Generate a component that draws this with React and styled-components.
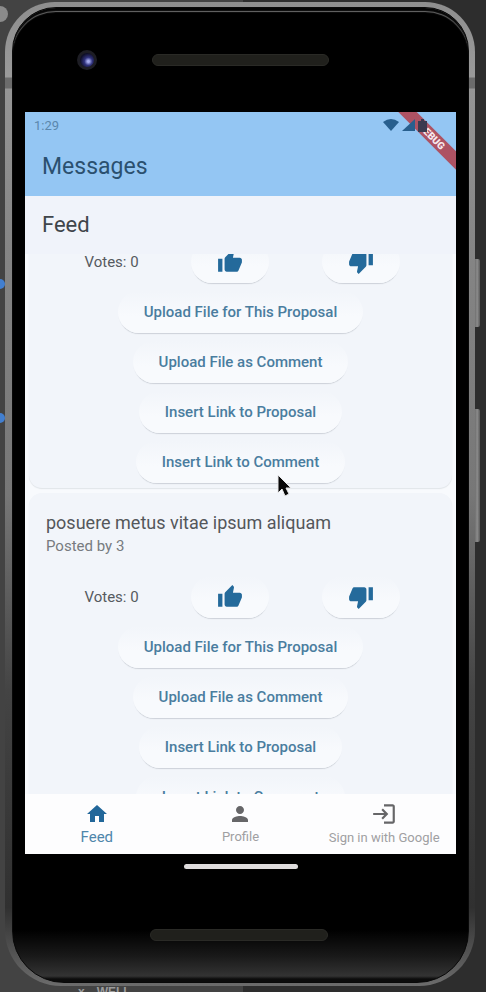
import React, { useLayoutEffect, useRef } from "react";
import styled, { createGlobalStyle } from "styled-components";
import { MdHome, MdPerson, MdLogin, MdThumbUp, MdThumbDown } from "react-icons/md";

const GlobalStyle = createGlobalStyle`
  * { box-sizing: border-box; }
  body { margin: 0; background: #2d2d2d; font-family: Roboto, "Liberation Sans", sans-serif; }
  button { font-family: inherit; cursor: pointer; }
`;

const Desk = styled.main`
  position: relative;
  height: 100vh;
  padding: 2px 11px 6px 5px;
  overflow: hidden;
  background: linear-gradient(90deg, #434343 0 50%, #2d2d2d 50%);
`;

const Dot = styled.span`
  position: absolute;
  left: -${(p) => p.$r}px;
  top: ${(p) => p.$top}px;
  width: ${(p) => p.$r * 2}px;
  height: ${(p) => p.$r * 2}px;
  border-radius: 50%;
  background: ${(p) => p.$color};
`;

const SideKey = styled.span`
  position: absolute;
  right: 6px;
  top: ${(p) => p.$top}px;
  width: 7px;
  height: ${(p) => p.$height}px;
  border-radius: 2px;
  background: linear-gradient(90deg, #555, #8c8c8c 60%, #5a5a5a);
`;

const TerminalText = styled.span`
  position: absolute;
  left: 78px;
  top: 100%;
  margin-top: -7px;
  display: flex;
  gap: 12px;
  font: 700 12px/14px "Liberation Sans", sans-serif;
  color: #9b9b9b;
`;

const Rim = styled.div`
  position: relative;
  height: 100%;
  padding: 5px 6px 3px 7px;
  border-radius: 50px 50px 56px 56px;
  background: linear-gradient(180deg, #8e8e8e 0, #9a9a9a 75px, #6c6c6c 76px, #6c6c6c 86px, #969696 87px, #858585 25%, #777 50%, #444 70%, #303030 92%, #6c6c6c 100%);
`;

const Body = styled.div`
  height: 100%;
  display: flex;
  flex-direction: column;
  padding: 0 12px;
  border: 1px solid #090909;
  border-radius: 44px 44px 52px 52px;
  background: linear-gradient(180deg, #000 0, #000 calc(100% - 52px), #191919 calc(100% - 26px), #333 calc(100% - 6px), #0c0c0c calc(100% - 3px));
  box-shadow: inset 0 4px 1px -1px #050505, inset 0 5px 1px -1px #777;
`;

const Forehead = styled.div`
  flex: none;
  height: 104px;
  display: flex;
  align-items: center;
  padding: 0 127px 0 52px;
`;

const Camera = styled.span`
  flex: none;
  width: 20px;
  height: 20px;
  margin-right: 55px;
  border-radius: 50%;
  border: 3px solid #1d1d24;
  background: radial-gradient(circle at 60% 60%, #a5abee 0 1px, #30327d 4px, #10102a 8px);
`;

const Speaker = styled.span`
  flex: 1;
  height: 12px;
  border-radius: 6px;
  border: 1px solid #2a2a26;
  background: #20201c;
`;

const Screen = styled.section`
  position: relative;
  flex: 1;
  min-height: 0;
  display: flex;
  flex-direction: column;
  overflow: hidden;
  background: #f2f5fa;
`;

const TopBar = styled.header`
  flex: none;
  height: 84px;
  padding: 0 17px;
  background: #94c6f3;
`;

const StatusBar = styled.div`
  position: relative;
  z-index: 2;
  display: flex;
  justify-content: space-between;
  align-items: center;
  height: 26px;
  margin: 0 12px 0 -8px;
  font-size: 13px;
  color: #5b87ad;
`;

const StatusIcons = styled.span`
  display: flex;
  align-items: center;
  gap: 3px;
  color: #285f8e;
`;

const AppTitle = styled.h1`
  margin: 14px 0 0;
  font-size: 23px;
  line-height: 30px;
  font-weight: 400;
  color: #2b506f;
`;

const Banner = styled.span`
  position: absolute;
  z-index: 1;
  top: 18px;
  right: -26px;
  width: 100px;
  height: 13px;
  line-height: 13px;
  text-align: center;
  font-size: 10px;
  font-weight: 900;
  color: #f7e9ee;
  background: #ad5263;
  transform: rotate(45deg);
`;

const FeedHeading = styled.h2`
  flex: none;
  margin: 0;
  padding: 14px 17px 14px;
  font-size: 22px;
  line-height: 30px;
  font-weight: 400;
  color: #3f454b;
  background: #f0f3fa;
`;

const FeedList = styled.div`
  flex: 1;
  min-height: 0;
  overflow-y: auto;
  scrollbar-width: none;
  padding: 0 4px;
  background: #f8fafd;
`;

const Card = styled.article`
  display: flex;
  flex-direction: column;
  align-items: center;
  gap: 8px;
  margin-bottom: 5px;
  padding-bottom: 5px;
  border-radius: ${(p) => (p.$continued ? "0 0 13px 13px" : "13px")};
  background: #f2f5fa;
  box-shadow: 0 1px 1px rgba(60, 70, 85, 0.12);
`;

const CardHeader = styled.div`
  align-self: stretch;
  padding: 17px 17px 11px;
`;

const CardTitle = styled.h3`
  margin: 0;
  font-size: 18px;
  line-height: 25px;
  font-weight: 400;
  color: #54575b;
`;

const CardAuthor = styled.p`
  margin: 0;
  font-size: 15px;
  line-height: 22px;
  color: #777b80;
`;

const VoteRow = styled.div`
  align-self: stretch;
  display: flex;
  justify-content: space-evenly;
  align-items: center;
  padding-left: 3px;
  font-size: 15px;
  color: #565a5f;
`;

const PillButton = styled.button`
  display: flex;
  justify-content: center;
  align-items: center;
  height: 42px;
  padding: 0 26px;
  border: 0;
  border-radius: 21px;
  font-size: 15px;
  font-weight: 500;
  color: #4a7d9f;
  background: linear-gradient(180deg, #f2f5fa, #f8fafd 60%);
  box-shadow: 0 2px 1px -1px rgba(60, 70, 85, 0.2);
`;

const VoteButton = styled(PillButton)`
  color: #246a9b;
`;

const BottomNav = styled.nav`
  flex: none;
  display: grid;
  grid-template-columns: repeat(3, 1fr);
  height: 60px;
  background: #fdfdfe;
`;

const NavItem = styled.button`
  display: flex;
  flex-direction: column;
  align-items: center;
  justify-content: center;
  gap: 1px;
  padding: 0;
  border: 0;
  background: none;
  white-space: nowrap;
  font-size: ${(p) => (p.$active ? 15 : 13)}px;
  line-height: 20px;
  color: ${(p) => (p.$active ? "#4f86ab" : "#a0a0a2")};
  svg { flex: none; color: ${(p) => (p.$active ? "#22679a" : "#666668")}; }
`;

const Pointer = styled.svg`
  position: absolute;
  z-index: 3;
  left: 252px;
  top: 362px;
`;

const Chin = styled.div`
  flex: none;
  display: flex;
  flex-direction: column;
  align-items: center;
  height: 128px;
  padding-top: 10px;
`;

const HomeHandle = styled.span`
  width: 114px;
  height: 5px;
  border-radius: 3px;
  background: #dedcdd;
`;

const LowerSpeaker = styled(Speaker)`
  flex: none;
  width: 178px;
  margin: 60px 4px 0 0;
`;

const ACTIONS = [
  "Upload File for This Proposal",
  "Upload File as Comment",
  "Insert Link to Proposal",
  "Insert Link to Comment",
];

function Proposal({ title, author, votes }) {
  return (
    <Card $continued={!title}>
      {title && (
        <CardHeader>
          <CardTitle>{title}</CardTitle>
          <CardAuthor>Posted by {author}</CardAuthor>
        </CardHeader>
      )}
      <VoteRow>
        <span>Votes: {votes}</span>
        <VoteButton aria-label="Vote up"><MdThumbUp size={26} /></VoteButton>
        <VoteButton aria-label="Vote down"><MdThumbDown size={26} /></VoteButton>
      </VoteRow>
      {ACTIONS.map((label) => (
        <PillButton key={label}>{label}</PillButton>
      ))}
    </Card>
  );
}

export default function App() {
  const list = useRef(null);
  useLayoutEffect(() => {
    list.current.scrollTop = 13;
  }, []);

  return (
    <>
      <GlobalStyle />
      <Desk>
        <Dot $r={8} $top={6} $color="#8b8b8b" />
        <Dot $r={5} $top={279} $color="#427fd0" />
        <Dot $r={5} $top={413} $color="#427fd0" />
        <SideKey $top={259} $height={68} />
        <SideKey $top={409} $height={133} />
        <TerminalText><span>x</span><span>WELL</span></TerminalText>
        <Rim>
          <Body>
            <Forehead>
              <Camera />
              <Speaker />
            </Forehead>
            <Screen>
              <TopBar>
                <StatusBar>
                  <span>1:29</span>
                  <StatusIcons>
                    <svg width="16" height="12" viewBox="0 0 16 12" fill="currentColor"><path d="M0 3Q8-3 16 3L8 12Z" /></svg>
                    <svg width="13" height="12" viewBox="0 0 13 12" fill="currentColor"><path d="M13 0V12H0Z" /></svg>
                    <svg width="9" height="13" viewBox="0 0 9 13" fill="#3b3a50"><path d="M3 0h3v2h3v11H0V2h3z" /></svg>
                  </StatusIcons>
                </StatusBar>
                <AppTitle>Messages</AppTitle>
              </TopBar>
              <Banner>DEBUG</Banner>
              <FeedHeading>Feed</FeedHeading>
              <FeedList ref={list}>
                <Proposal votes={0} />
                <Proposal title="posuere metus vitae ipsum aliquam" author={3} votes={0} />
              </FeedList>
              <BottomNav>
                <NavItem $active><MdHome size={24} />Feed</NavItem>
                <NavItem><MdPerson size={24} />Profile</NavItem>
                <NavItem><MdLogin size={26} />Sign in with Google</NavItem>
              </BottomNav>
              <Pointer width="15" height="24" viewBox="0 0 15 24">
                <path d="M1 1v18l4-4 3 7 4-2-3-6h5z" fill="#080808" stroke="#e8e8ea" strokeWidth="1" />
              </Pointer>
            </Screen>
            <Chin>
              <HomeHandle />
              <LowerSpeaker />
            </Chin>
          </Body>
        </Rim>
      </Desk>
    </>
  );
}
